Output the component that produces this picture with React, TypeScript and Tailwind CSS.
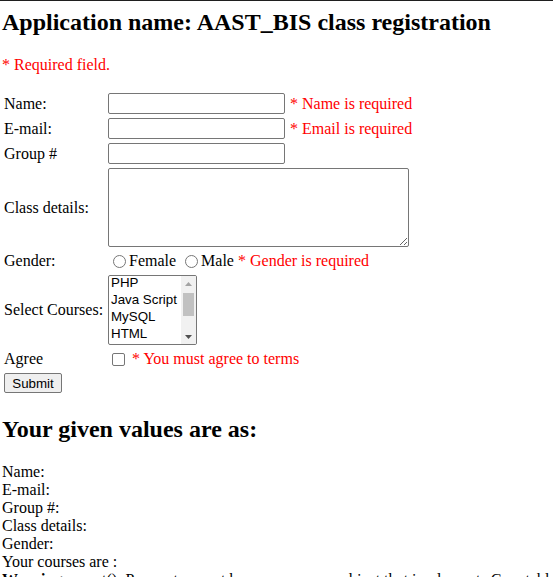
import React from "react";

function TextBox() {
  return (
    <div className="w-[177px] h-[21px] border border-[#767676] rounded-[2px] bg-white shrink-0" />
  );
}

function Radio({ first }: { first?: boolean }) {
  return (
    <span
      className={
        first
          ? "inline-block w-[13px] h-[13px] rounded-full border border-[#767676] bg-white ml-[5px] mr-[3px] shrink-0"
          : "inline-block w-[13px] h-[13px] rounded-full border border-[#767676] bg-white ml-[9px] mr-[3px] shrink-0"
      }
    />
  );
}

function ListBox() {
  const opts = ["PHP", "Java Script", "MySQL", "HTML"];
  return (
    <div className="w-[89px] h-[70px] border border-[#767676] rounded-[2px] bg-white flex overflow-hidden font-['Liberation_Sans',Arial,sans-serif] text-[13.33px] text-black">
      <div className="flex-1 flex flex-col">
        {opts.map((o) => (
          <div key={o} className="h-[17px] leading-[14px] px-[2px] whitespace-nowrap">
            {o}
          </div>
        ))}
      </div>
      <div className="w-[15px] bg-[#f1f1f1] flex flex-col items-center">
        <div className="h-[15px] w-full flex items-center justify-center">
          <svg width="7" height="4" viewBox="0 0 7 4">
            <path d="M0 4 L3.5 0 L7 4 Z" fill="#a3a3a3" />
          </svg>
        </div>
        <div className="mt-[2px] w-[11px] h-[23px] bg-[#c1c1c1]" />
        <div className="flex-1" />
        <div className="h-[15px] w-full flex items-center justify-center">
          <svg width="7" height="4" viewBox="0 0 7 4">
            <path d="M0 0 L3.5 4 L7 0 Z" fill="#505050" />
          </svg>
        </div>
      </div>
    </div>
  );
}

export default function App() {
  return (
    <div className="w-[553px] h-[577px] overflow-hidden bg-white text-black font-['Liberation_Serif','Times_New_Roman',serif] text-[16px] leading-[18px]">
      <div className="h-px bg-[#1f1f1f]" />
      <div className="pl-[2px] pt-[8px]">
        <h2 className="text-[24px] leading-[27px] font-bold whitespace-nowrap">
          Application name: AAST_BIS class registration
        </h2>
        <p className="mt-[20px] text-[#ff0000]">* Required field.</p>

        <div className="mt-[16px] pt-[3px] pb-[3px] pl-[2px] grid grid-cols-[104px_auto] gap-y-[4px] items-center justify-start">
          <div>Name:</div>
          <div className="flex items-center">
            <TextBox />
            <span className="ml-[5px] text-[#ff0000] whitespace-nowrap">* Name is required</span>
          </div>

          <div>E-mail:</div>
          <div className="flex items-center">
            <TextBox />
            <span className="ml-[5px] text-[#ff0000] whitespace-nowrap">* Email is required</span>
          </div>

          <div>Group #</div>
          <div className="flex items-center">
            <TextBox />
          </div>

          <div>Class details:</div>
          <div className="flex items-center">
            <textarea className="block w-[301px] h-[79px] border border-[#767676] rounded-[2px] bg-white resize" />
          </div>

          <div>Gender:</div>
          <div className="flex items-center h-[20px] whitespace-nowrap">
            <Radio first />
            <span>Female</span>
            <Radio />
            <span>Male</span>
            <span className="ml-[4px] text-[#ff0000]">* Gender is required</span>
          </div>

          <div className="whitespace-nowrap">Select Courses:</div>
          <div className="flex items-center">
            <ListBox />
          </div>

          <div>Agree</div>
          <div className="flex items-center h-[20px] whitespace-nowrap">
            <span className="inline-block w-[13px] h-[13px] rounded-[2px] border border-[#767676] bg-white ml-[4px] mr-[3px] shrink-0" />
            <span className="ml-[4px] text-[#ff0000]">* You must agree to terms</span>
          </div>

          <div className="flex items-center h-[20px]">
            <button
              type="button"
              className="w-[58px] h-[20px] bg-[#efefef] border border-[#767676] rounded-[2px] font-['Liberation_Sans',Arial,sans-serif] text-[13.33px] leading-[15px] text-black flex items-center justify-center"
            >
              Submit
            </button>
          </div>
          <div />
        </div>

        <h2 className="mt-[20px] text-[24px] leading-[27px] font-bold whitespace-nowrap">
          Your given values are as:
        </h2>
        <div className="mt-[20px] flex flex-col">
          <div>Name:</div>
          <div>E-mail:</div>
          <div>Group #:</div>
          <div>Class details:</div>
          <div>Gender:</div>
          <div>Your courses are :</div>
          <div className="whitespace-nowrap">
            <b>Warning</b>: count(): Parameter must be an array or an object that implements Countable in C:\xampp\htdocs\AAST_BIS\index.php on line 112
          </div>
        </div>
      </div>
    </div>
  );
}
